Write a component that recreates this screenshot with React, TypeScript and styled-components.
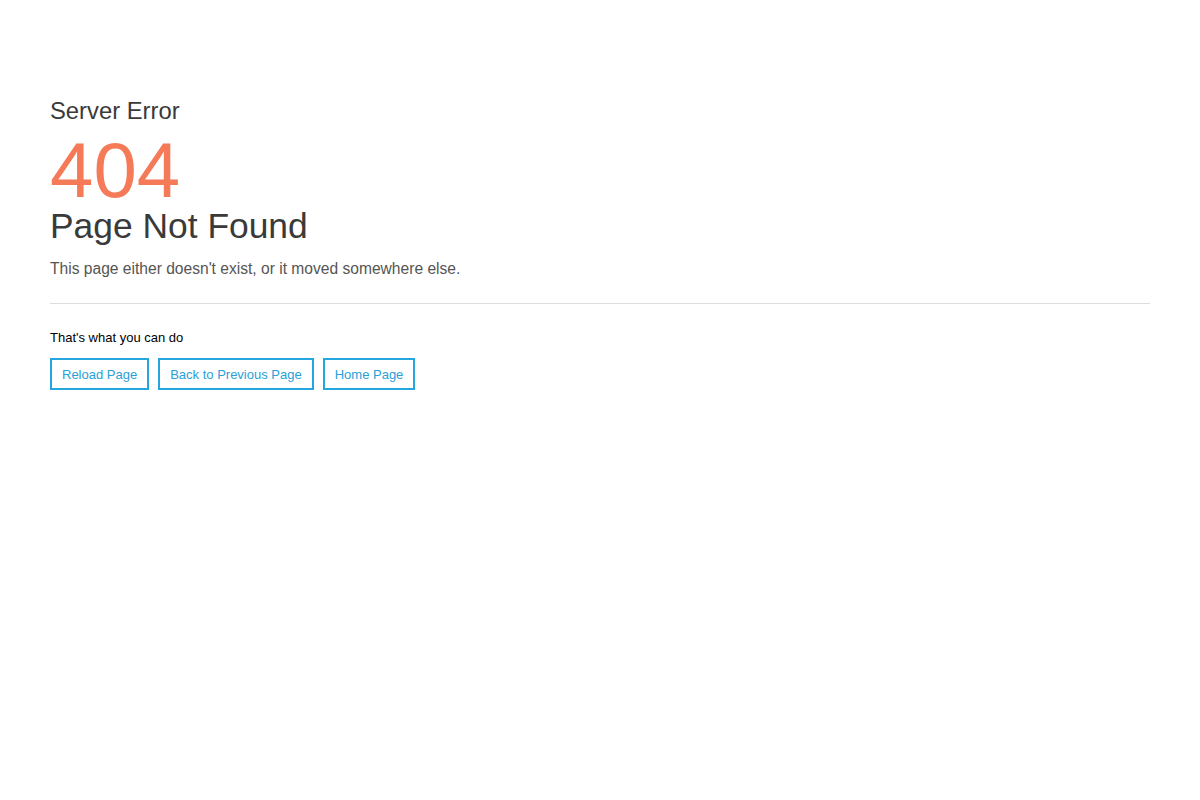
import React from "react";
import styled, { createGlobalStyle } from "styled-components";

const Global = createGlobalStyle`
  html, body { margin: 0; padding: 0; background: #fff; }
  body { font-family: "Liberation Sans", Arial, sans-serif; }
`;

const Page = styled.main`
  padding: 98px 50px 0 50px;
  display: flex;
  flex-direction: column;
`;

const Kicker = styled.h3`
  margin: 0;
  font-size: 23.8px;
  line-height: 26.4px;
  font-weight: 400;
  color: #3a3a3a;
`;

const Code = styled.div`
  margin-top: 10px;
  font-size: 78px;
  line-height: 72px;
  color: #f47a58;
`;

const Title = styled.h1`
  margin: 1px 0 0;
  font-size: 35.4px;
  line-height: 39.6px;
  font-weight: 400;
  color: #3a3a3a;
`;

const Lead = styled.p`
  margin: 11px 0 0;
  font-size: 15.6px;
  line-height: 22px;
  color: #555;
`;

const Rule = styled.hr`
  margin: 23px 0 0;
  border: 0;
  border-top: 1px solid #dddddd;
  width: 100%;
`;

const Hint = styled.p`
  margin: 25px 0 0;
  font-size: 13px;
  line-height: 18px;
  color: #000;
`;

const Actions = styled.div`
  margin-top: 11px;
  display: flex;
  gap: 9px;
`;

const ActionButton = styled.a`
  display: inline-flex;
  align-items: center;
  box-sizing: border-box;
  height: 32px;
  padding: 0 10px;
  border: 2px solid #26a6df;
  color: #2a9fd8;
  font-size: 13px;
  text-decoration: none;
  background: #fff;
  cursor: pointer;
`;

export default function App() {
  return (
    <>
      <Global />
      <Page>
        <Kicker>Server Error</Kicker>
        <Code>404</Code>
        <Title>Page Not Found</Title>
        <Lead>This page either doesn't exist, or it moved somewhere else.</Lead>
        <Rule />
        <Hint>That's what you can do</Hint>
        <Actions>
          <ActionButton>Reload Page</ActionButton>
          <ActionButton>Back to Previous Page</ActionButton>
          <ActionButton>Home Page</ActionButton>
        </Actions>
      </Page>
    </>
  );
}
